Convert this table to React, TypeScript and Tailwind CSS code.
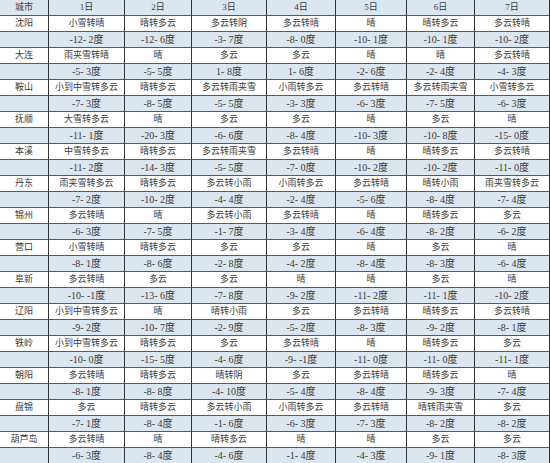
const days = ["1日", "2日", "3日", "4日", "5日", "6日", "7日"]

const widths = [49, 76, 67, 75, 69, 71, 68, 75]

type ICity = {
  name: string
  weather: string[]
  temp: string[]
}

const cities: ICity[] = [
  {
    name: "沈阳",
    weather: ["小雪转晴", "晴转多云", "多云转阴", "多云转晴", "晴", "晴转多云", "多云转晴"],
    temp: ["-12- 2度", "-12- 6度", "-3- 7度", "-8- 0度", "-10- 1度", "-10- 1度", "-10- 2度"],
  },
  {
    name: "大连",
    weather: ["雨夹雪转晴", "晴", "多云", "多云", "晴", "晴", "多云转晴"],
    temp: ["-5- 3度", "-5- 5度", "1- 8度", "1- 6度", "-2- 6度", "-2- 4度", "-4- 3度"],
  },
  {
    name: "鞍山",
    weather: ["小到中雪转多云", "晴转多云", "多云转雨夹雪", "小雨转多云", "多云转晴", "多云转雨夹雪", "小雪转多云"],
    temp: ["-7- 3度", "-8- 5度", "-5- 5度", "-3- 3度", "-6- 3度", "-7- 5度", "-6- 3度"],
  },
  {
    name: "抚顺",
    weather: ["大雪转多云", "晴", "多云", "多云", "晴", "多云", "晴"],
    temp: ["-11- 1度", "-20- 3度", "-6- 6度", "-8- 4度", "-10- 3度", "-10- 8度", "-15- 0度"],
  },
  {
    name: "本溪",
    weather: ["中雪转多云", "晴转多云", "多云转雨夹雪", "多云转晴", "晴", "晴转多云", "多云转晴"],
    temp: ["-11- 2度", "-14- 3度", "-5- 5度", "-7- 0度", "-10- 2度", "-10- 2度", "-11- 0度"],
  },
  {
    name: "丹东",
    weather: ["雨夹雪转多云", "晴转多云", "多云转小雨", "小雨转多云", "多云转晴", "晴转小雨", "雨夹雪转多云"],
    temp: ["-7- 2度", "-10- 2度", "-4- 4度", "-2- 4度", "-5- 6度", "-8- 4度", "-7- 4度"],
  },
  {
    name: "锦州",
    weather: ["多云转晴", "晴", "多云转小雨", "多云转晴", "晴", "晴转多云", "多云"],
    temp: ["-6- 3度", "-7- 5度", "-1- 7度", "-3- 4度", "-6- 4度", "-8- 2度", "-6- 2度"],
  },
  {
    name: "营口",
    weather: ["小雪转晴", "晴转多云", "多云", "多云", "晴", "多云", "晴"],
    temp: ["-8- 1度", "-8- 6度", "-2- 8度", "-4- 2度", "-8- 4度", "-8- 3度", "-6- 4度"],
  },
  {
    name: "阜新",
    weather: ["多云转晴", "多云", "多云", "晴", "晴", "多云", "晴"],
    temp: ["-10- -1度", "-13- 6度", "-7- 8度", "-9- 2度", "-11- 2度", "-11- 1度", "-10- 2度"],
  },
  {
    name: "辽阳",
    weather: ["小到中雪转多云", "晴", "晴转小雨", "多云", "多云转晴", "晴转多云", "多云转晴"],
    temp: ["-9- 2度", "-10- 7度", "-2- 9度", "-5- 2度", "-8- 3度", "-9- 2度", "-8- 1度"],
  },
  {
    name: "铁岭",
    weather: ["小到中雪转多云", "晴转多云", "多云", "多云转晴", "晴", "晴转多云", "多云"],
    temp: ["-10- 0度", "-15- 5度", "-4- 6度", "-9- -1度", "-11- 0度", "-11- 0度", "-11- 1度"],
  },
  {
    name: "朝阳",
    weather: ["多云转晴", "晴转多云", "晴转阴", "多云", "多云转晴", "晴转多云", "晴"],
    temp: ["-8- 1度", "-8- 8度", "-4- 10度", "-5- 4度", "-8- 4度", "-9- 3度", "-7- 4度"],
  },
  {
    name: "盘锦",
    weather: ["多云", "晴转多云", "多云转小雨", "小雨转多云", "多云转晴", "晴转雨夹雪", "多云"],
    temp: ["-7- 1度", "-8- 4度", "-1- 6度", "-6- 3度", "-7- 3度", "-8- 2度", "-8- 2度"],
  },
  {
    name: "葫芦岛",
    weather: ["多云转晴", "晴", "晴转多云", "晴", "晴", "多云", "多云"],
    temp: ["-6- 3度", "-8- 4度", "-4- 6度", "-1- 4度", "-4- 3度", "-9- 1度", "-8- 3度"],
  },
]

// fixed 15px content + 1px rule, so 29 rows fill the 463px frame
const cell =
  "h-[15px] border-t border-r border-t-[#5a5a5a] border-r-[#333] p-0 text-center align-middle leading-[15px] whitespace-nowrap overflow-hidden"

export default function App() {
  return (
    <div className="w-[550px] h-[463px] overflow-hidden bg-white font-['Liberation_Serif','Noto_Sans_CJK_SC',serif] text-[9px] text-[#3a3a3a]">
      <table className="w-[550px] table-fixed border-separate border-spacing-0">
        <colgroup>
          {widths.map((w, i) => (
            <col key={i} style={{ width: w }} />
          ))}
        </colgroup>
        <thead>
          <tr className="bg-[#dae6f0]">
            <th className={`${cell} border-t-0 font-normal`}>城市</th>
            {days.map((d) => (
              <th key={d} className={`${cell} border-t-0 font-normal`}>
                {d}
              </th>
            ))}
          </tr>
        </thead>
        <tbody>
          {cities.map((c) => [
            <tr key={c.name + "w"} className="bg-white">
              <td className={cell}>{c.name}</td>
              {c.weather.map((w, i) => (
                <td key={i} className={cell}>
                  {w}
                </td>
              ))}
            </tr>,
            <tr key={c.name + "t"} className="bg-[#dae6f0]">
              <td className={cell}></td>
              {c.temp.map((t, i) => (
                <td key={i} className={`${cell} text-[10px]`}>
                  {t}
                </td>
              ))}
            </tr>,
          ])}
        </tbody>
      </table>
    </div>
  )
}
